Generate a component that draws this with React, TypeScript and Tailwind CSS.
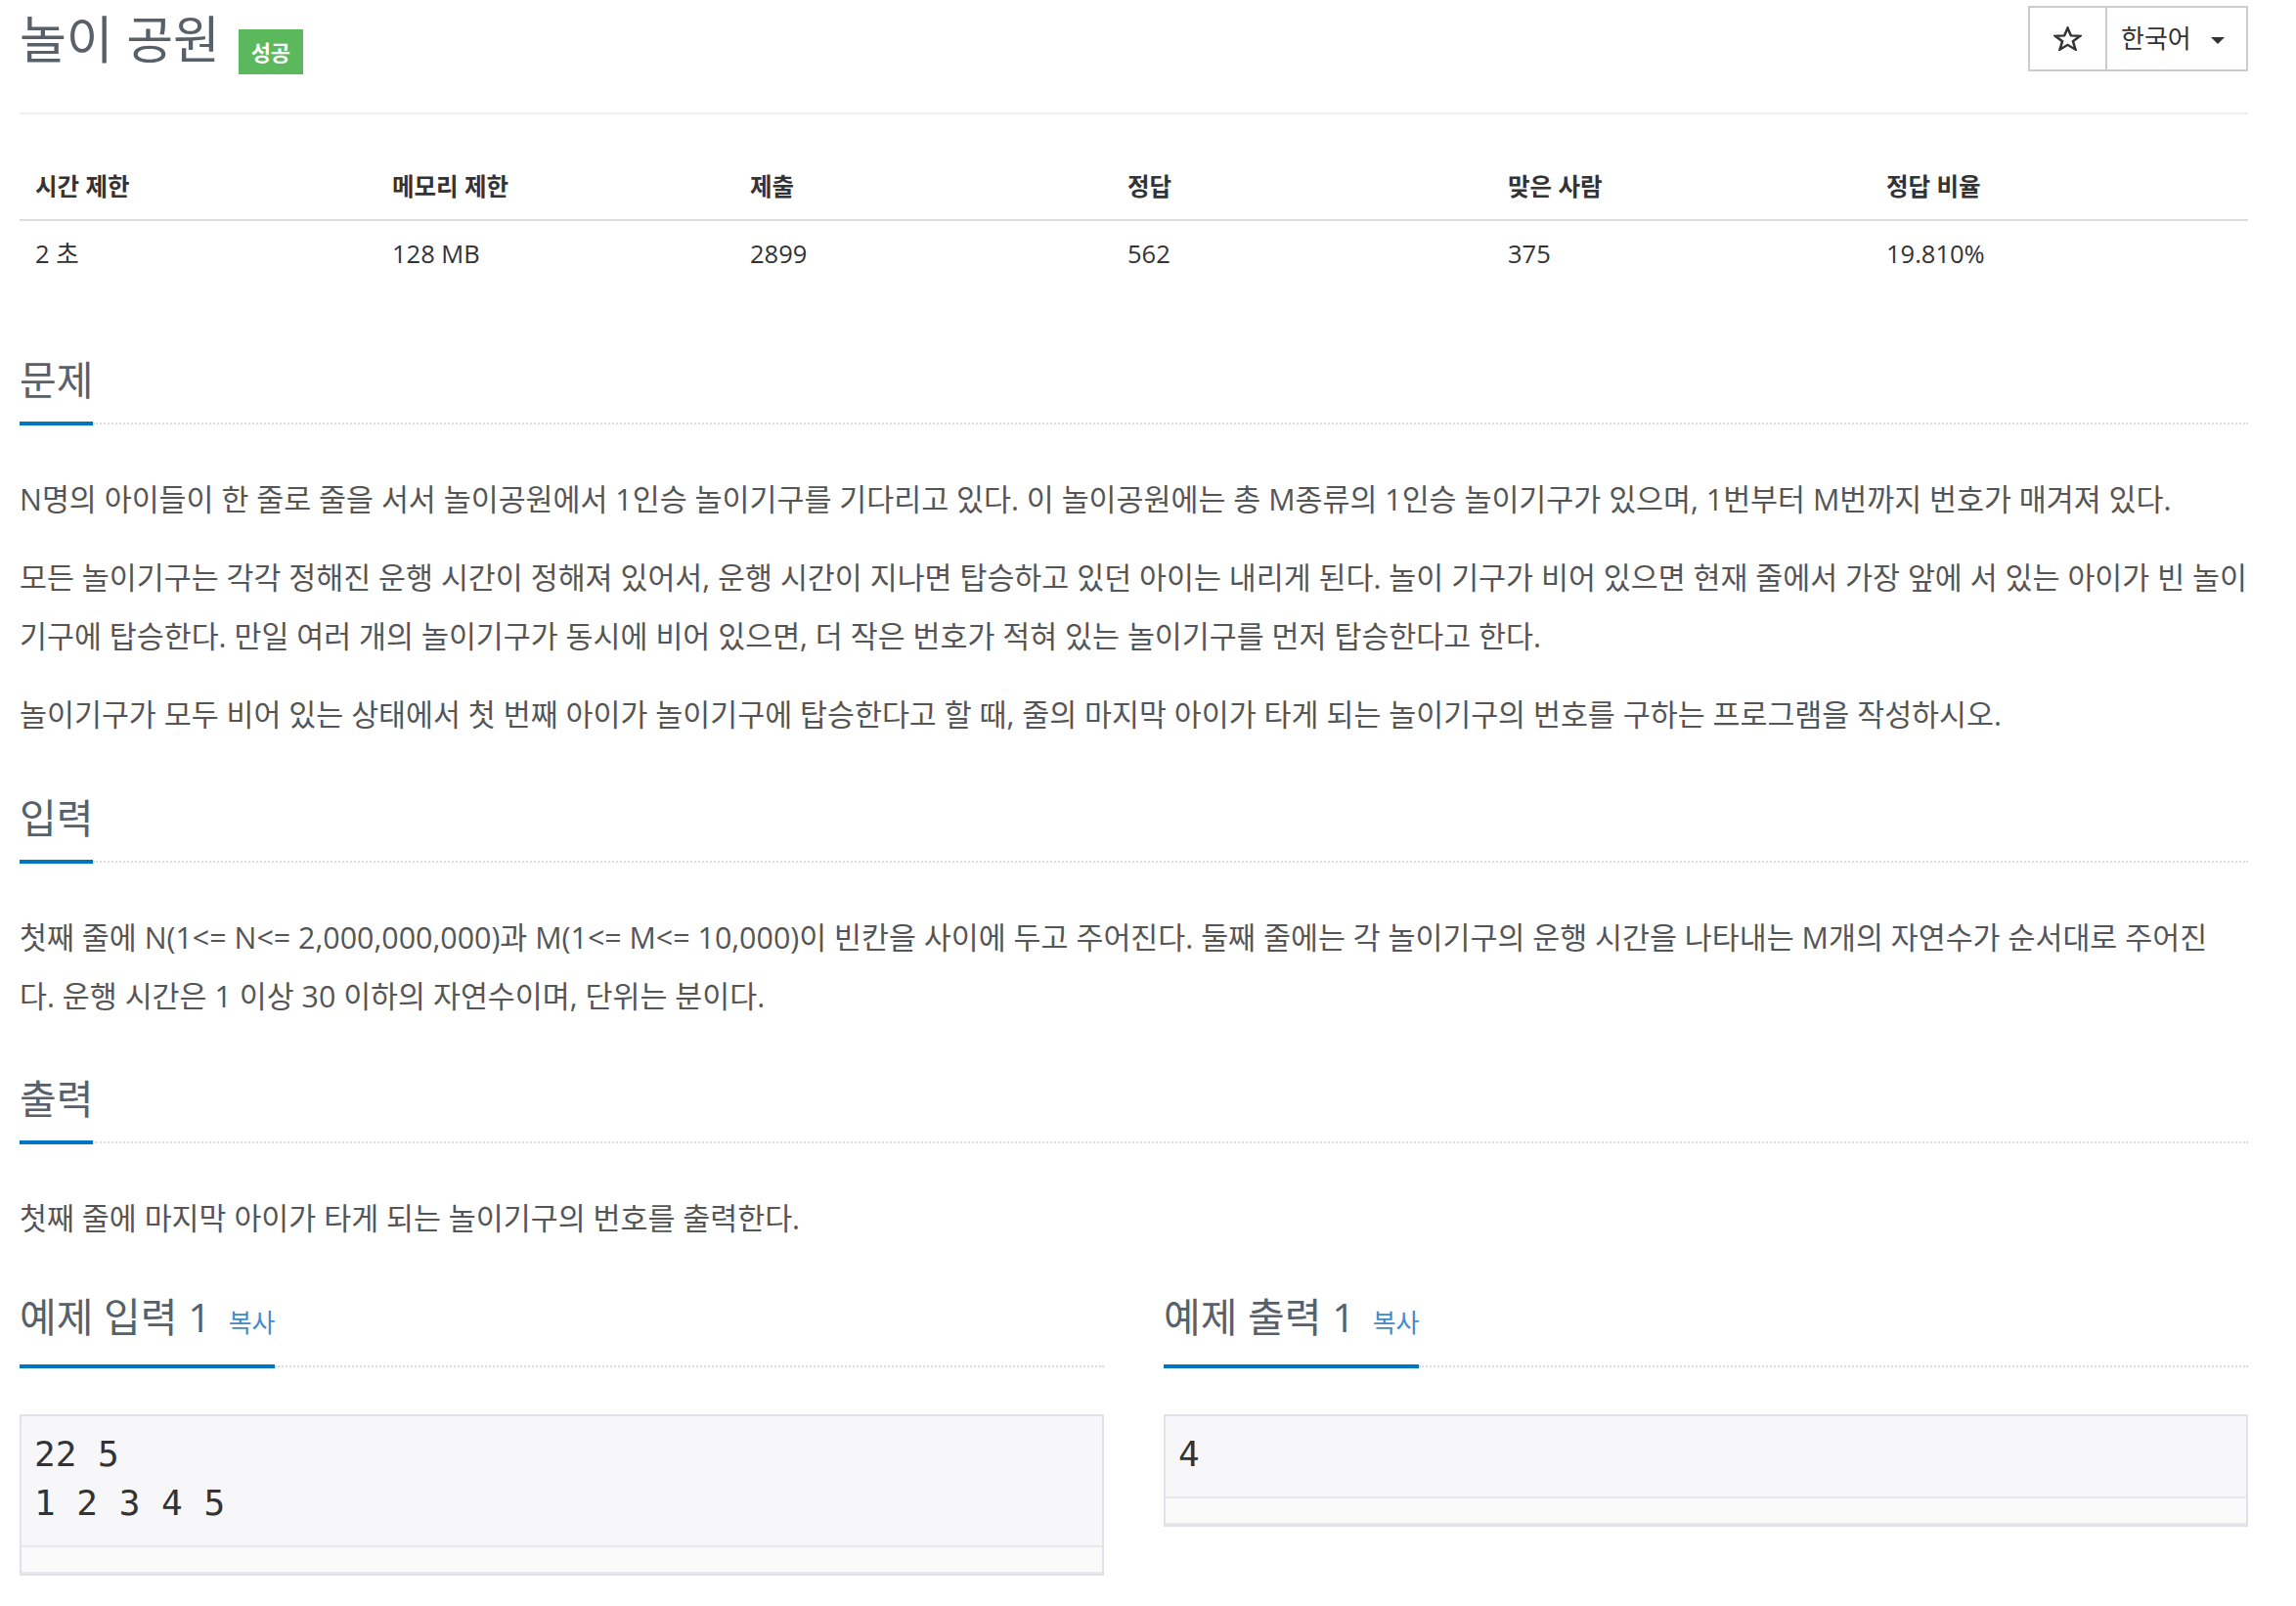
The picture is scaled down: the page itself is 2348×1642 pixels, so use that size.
import React from "react";

function SectionHeading({ children }: { children: React.ReactNode }) {
  return (
    <div className="flex">
      <h2 className="whitespace-nowrap border-b-4 border-[#0076c0] pb-[19px] text-[41px] font-normal leading-[48px] text-[#58606a]">
        {children}
      </h2>
      <div className="mb-[1px] flex-1 border-b-2 border-dotted border-[#dcdcdc]" />
    </div>
  );
}

function CopyLink() {
  return <span className="ml-[18px] text-[26px] text-[#428bca]">복사</span>;
}

function SampleBox({ text }: { text: string }) {
  return (
    <div className="mt-[47px] border-2 border-[#e1e1e8] bg-[#f7f7f9]">
      <pre className="pl-[13px] pb-[18px] pt-[14px] font-['DejaVu_Sans_Mono',monospace] text-[36px] leading-[50px] text-[#333]">
        {text}
      </pre>
      <div className="h-[29px] border-y-2 border-[#e8e8ec] bg-[#fafafa]" />
    </div>
  );
}

const headers = ["시간 제한", "메모리 제한", "제출", "정답", "맞은 사람", "정답 비율"];
const values = ["2 초", "128 MB", "2899", "562", "375", "19.810%"];

export default function App() {
  return (
    <div className="min-h-[1642px] w-[2348px] bg-white pl-[20px] pr-[49px] font-['Open_Sans','Noto_Sans_CJK_KR',sans-serif] text-[#555]">
      {/* Title row */}
      <div className="flex h-[117px] items-start justify-between border-b-2 border-[#eee]">
        <div className="flex items-start">
          <h1 className="whitespace-nowrap text-[52px] font-normal leading-[80px] text-[#58606a]">놀이 공원</h1>
          <span className="ml-[19px] mt-[30px] flex h-[46px] w-[66px] items-center justify-center bg-[#5cb85c] text-[22px] font-bold text-white">
            성공
          </span>
        </div>
        <div className="mt-[6px] flex h-[67px] border-2 border-[#ccc] text-[#333]">
          <div className="flex w-[79px] items-center justify-center border-r-2 border-[#ccc]">
            <svg width="29" height="25" viewBox="0 0 24 22" preserveAspectRatio="none">
              <polygon
                points="12,1.5 14.8,8.3 22.5,8.6 16.5,13.4 18.6,20.8 12,16.6 5.4,20.8 7.5,13.4 1.5,8.6 9.2,8.3"
                fill="none"
                stroke="#333"
                strokeWidth="2.1"
                strokeLinejoin="miter"
              />
            </svg>
          </div>
          <div className="flex w-[142px] items-center pl-[14px] text-[26px]">
            <span>한국어</span>
            <span className="ml-[20px] mt-[4px] h-0 w-0 border-l-[7.5px] border-r-[7.5px] border-t-[7px] border-l-transparent border-r-transparent border-t-[#333]" />
          </div>
        </div>
      </div>

      {/* Info table */}
      <div className="mt-[41px] grid grid-cols-[365px_366px_386px_389px_387px_386px] text-[#333]">
        {headers.map((h) => (
          <div key={h} className="whitespace-nowrap border-b-2 border-[#ddd] px-[16px] py-[16px] text-[24.5px] font-bold leading-[34px]">
            {h}
          </div>
        ))}
        {values.map((v) => (
          <div key={v} className="whitespace-nowrap px-[16px] py-[16px] text-[25.5px] leading-[34px]">
            {v}
          </div>
        ))}
      </div>

      {/* 문제 */}
      <div className="mt-[72px]">
        <SectionHeading>문제</SectionHeading>
      </div>
      <div className="mt-[46px] flex flex-col gap-[20px] whitespace-nowrap text-[30.4px] leading-[60px]">
        <p>
          N명의 아이들이 한 줄로 줄을 서서 놀이공원에서 1인승 놀이기구를 기다리고 있다. 이 놀이공원에는 총 M종류의 1인승 놀이기구가 있으며, 1번부터 M번까지 번호가 매겨져 있다.
        </p>
        <p>
          모든 놀이기구는 각각 정해진 운행 시간이 정해져 있어서, 운행 시간이 지나면 탑승하고 있던 아이는 내리게 된다. 놀이 기구가 비어 있으면 현재 줄에서 가장 앞에 서 있는 아이가 빈 놀이
          <br />
          기구에 탑승한다. 만일 여러 개의 놀이기구가 동시에 비어 있으면, 더 작은 번호가 적혀 있는 놀이기구를 먼저 탑승한다고 한다.
        </p>
        <p>
          놀이기구가 모두 비어 있는 상태에서 첫 번째 아이가 놀이기구에 탑승한다고 할 때, 줄의 마지막 아이가 타게 되는 놀이기구의 번호를 구하는 프로그램을 작성하시오.
        </p>
      </div>

      {/* 입력 */}
      <div className="mt-[51px]">
        <SectionHeading>입력</SectionHeading>
      </div>
      <div className="mt-[46px] whitespace-nowrap text-[30.4px] leading-[60px]">
        <p>
          첫째 줄에 N(1&lt;= N&lt;= 2,000,000,000)과 M(1&lt;= M&lt;= 10,000)이 빈칸을 사이에 두고 주어진다. 둘째 줄에는 각 놀이기구의 운행 시간을 나타내는 M개의 자연수가 순서대로 주어진
          <br />
          다. 운행 시간은 1 이상 30 이하의 자연수이며, 단위는 분이다.
        </p>
      </div>

      {/* 출력 */}
      <div className="mt-[50px]">
        <SectionHeading>출력</SectionHeading>
      </div>
      <div className="mt-[46px] whitespace-nowrap text-[30.4px] leading-[60px]">
        <p>첫째 줄에 마지막 아이가 타게 되는 놀이기구의 번호를 출력한다.</p>
      </div>

      {/* Samples */}
      <div className="mt-[46px] grid grid-cols-2 items-start gap-x-[61px]">
        <div>
          <SectionHeading>
            예제 입력 1<CopyLink />
          </SectionHeading>
          <SampleBox text={"22 5\n1 2 3 4 5"} />
        </div>
        <div>
          <SectionHeading>
            예제 출력 1<CopyLink />
          </SectionHeading>
          <SampleBox text={"4"} />
        </div>
      </div>
    </div>
  );
}
